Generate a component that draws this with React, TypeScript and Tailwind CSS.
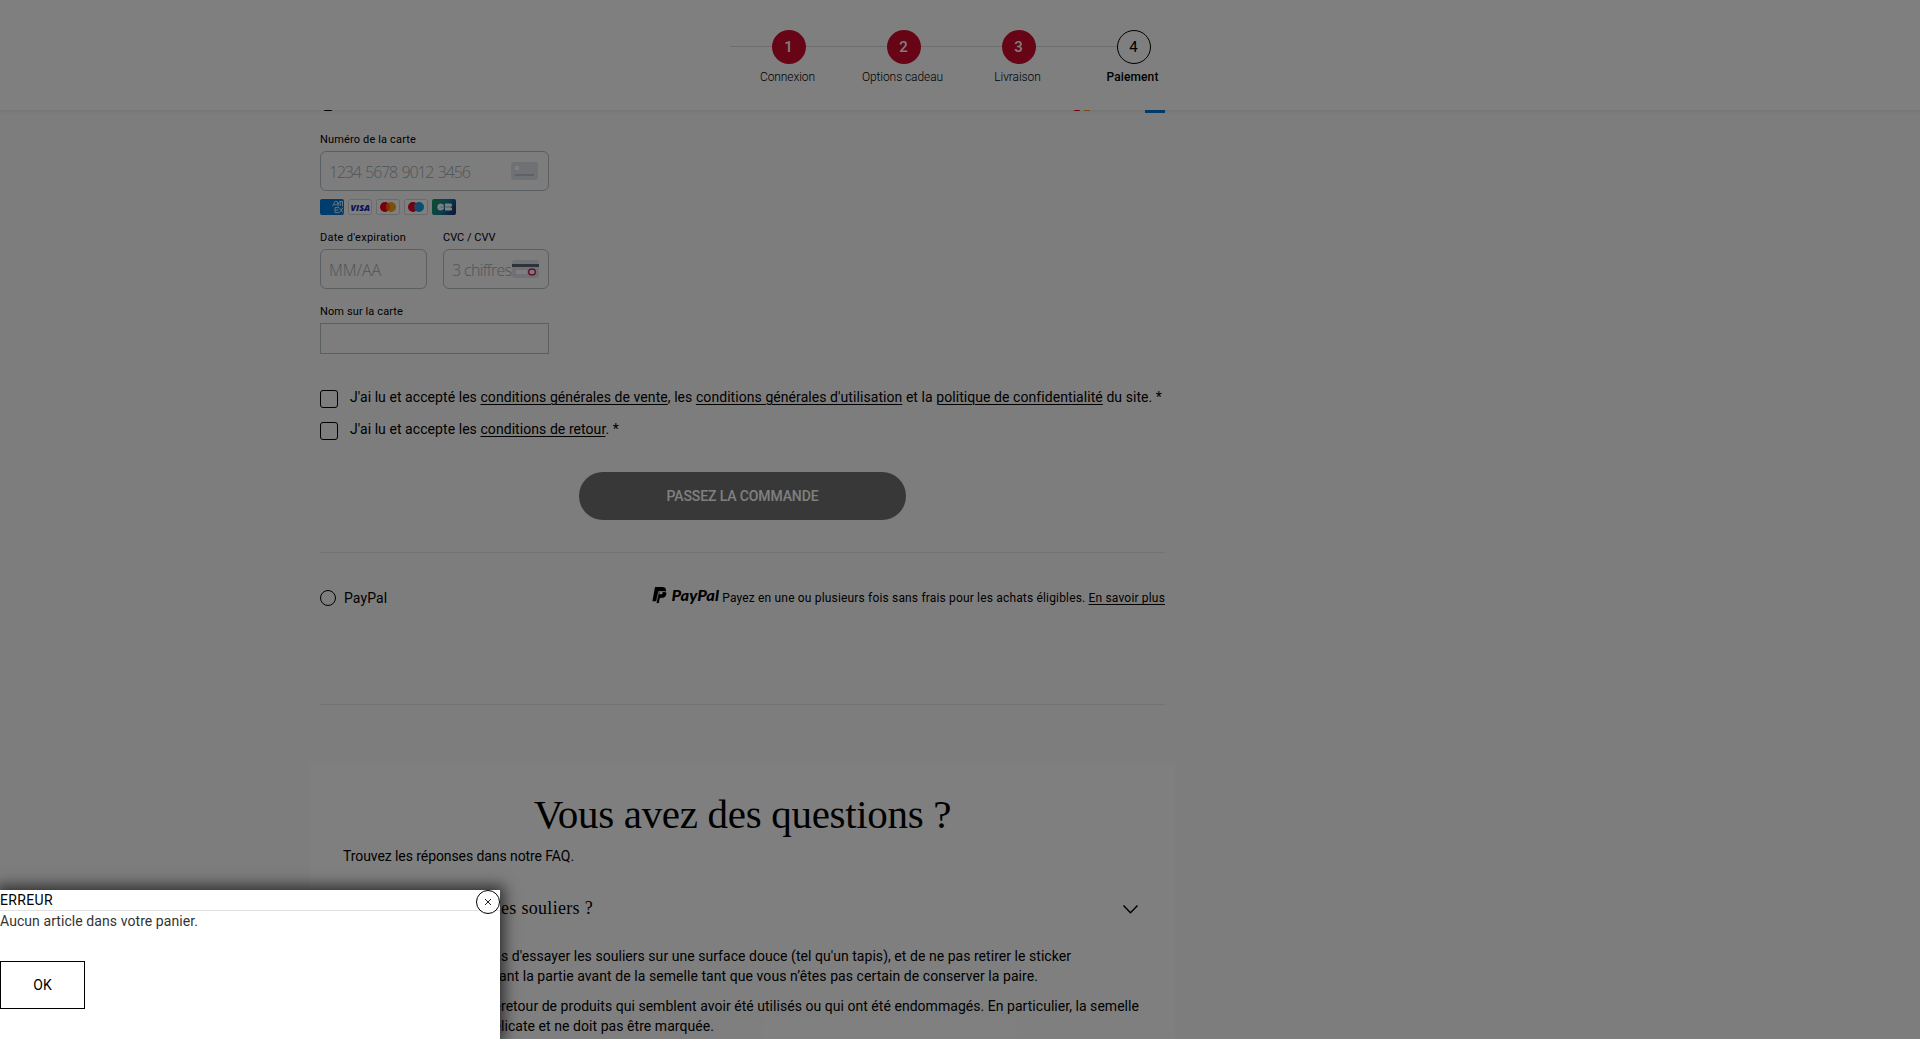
import type { ReactNode } from 'react';

function Step({ n, label, done = true }: { n: number; label: string; done?: boolean }) {
  return (
    <div className="flex w-[115px] flex-col items-center">
      <div
        className={
          done
            ? 'flex size-[34px] items-center justify-center rounded-full bg-[#ce0a2d] text-[15px] font-medium text-white'
            : 'flex size-[34px] items-center justify-center rounded-full border border-black bg-white text-[15px] text-black'
        }
      >
        {n}
      </div>
      <span
        className={
          done
            ? 'mt-[5px] mr-[2px] text-[12px] leading-4 font-light tracking-[-0.08px] whitespace-nowrap text-black'
            : 'mt-[5px] mr-[2px] text-[12px] leading-4 font-medium tracking-[0.11px] whitespace-nowrap text-black'
        }
      >
        {label}
      </span>
    </div>
  );
}

function Header() {
  return (
    <header className="relative z-10 h-[110px] bg-white pt-[30px] pl-[731px] shadow-[0_1px_4px_rgba(0,0,0,0.09)]">
      <div className="relative flex">
        <div className="absolute top-4 -left-px h-px w-[388px] bg-[#dadada]" />
        <div className="relative flex">
          <Step n={1} label="Connexion" />
          <Step n={2} label="Options cadeau" />
          <Step n={3} label="Livraison" />
          <Step n={4} label="Paiement" done={false} />
        </div>
      </div>
    </header>
  );
}

function Label({ children }: { children: ReactNode }) {
  return <div className="h-4 text-[11px] leading-4 tracking-[0.15px] whitespace-nowrap text-black">{children}</div>;
}

function Brands() {
  return (
    <div className="mt-2 flex gap-1">
      <svg width="24" height="16" viewBox="0 0 24 16">
        <rect width="24" height="16" rx="2" fill="#0079d8" />
        <g fill="none" stroke="#fff" strokeWidth="0.8">
          <path d="M12.500 7.200 15 2.500h2l1.200 3 1.400-3H23M14 5.700h3M18 7.500V3.800M20.300 7V3.200M22.500 7.300V3M15 8.600h4M15 8.600v5h4M15 11h3.500M19.500 8.800l3.500 4.700M23 8.800l-3.500 4.700" />
        </g>
      </svg>
      <svg width="24" height="16" viewBox="0 0 24 16">
        <rect x="0.500" y="0.500" width="23" height="15" rx="2" fill="#fff" stroke="#d5d5d5" />
        <text x="2.600" y="11.600" fontFamily="Open Sans" fontSize="9.500" fontWeight="800" fontStyle="italic" fill="#1a1fb5" textLength="19.500" lengthAdjust="spacingAndGlyphs">VISA</text>
      </svg>
      <svg width="24" height="16" viewBox="0 0 24 16">
        <rect x="0.500" y="0.500" width="23" height="15" rx="2" fill="#fff" stroke="#d5d5d5" />
        <circle cx="9" cy="8" r="5" fill="#eb001b" />
        <circle cx="15" cy="8" r="5" fill="#f79e1b" />
        <path d="M12 4a5 5 0 0 1 0 8 5 5 0 0 1 0-8Z" fill="#ff5f00" />
      </svg>
      <svg width="24" height="16" viewBox="0 0 24 16">
        <rect x="0.500" y="0.500" width="23" height="15" rx="2" fill="#fff" stroke="#d5d5d5" />
        <circle cx="9" cy="8" r="5" fill="#eb001b" />
        <circle cx="15" cy="8" r="5" fill="#00a2e5" />
        <path d="M12 4a5 5 0 0 1 0 8 5 5 0 0 1 0-8Z" fill="#7375cf" />
      </svg>
      <svg width="24" height="16" viewBox="0 0 24 16">
        <defs>
          <linearGradient id="cb" x1="0" y1="0.3" x2="1" y2="0.7">
            <stop offset="0" stopColor="#1a9a62" />
            <stop offset="0.5" stopColor="#137f9e" />
            <stop offset="1" stopColor="#16386f" />
          </linearGradient>
        </defs>
        <rect width="24" height="16" rx="2" fill="url(#cb)" />
        <path d="M12 7.700V6.500Q11 4.500 8.300 4.500A3.600 3.600 0 0 0 8.300 11.600Q11 11.600 12 9.500V8.300H8.500V7.700ZM13 4.500h5.500a1.600 1.600 0 0 1 0 3.200H13ZM13 8.300h5.500a1.600 1.600 0 0 1 0 3.300H13Z" fill="#fff" />
      </svg>
    </div>
  );
}

function CardForm() {
  return (
    <section className="w-[229px]">
      <Label>Numéro de la carte</Label>
      <div className="mt-[3px] flex h-10 items-center justify-between rounded-md border border-[#b4bfc4] pr-[10px] pl-2">
        <span className="pt-px font-['Open_Sans'] text-[16px] font-light tracking-[-1.2px] [word-spacing:1.6px] whitespace-nowrap text-[#9fabb0]">
          1234 5678 9012 3456
        </span>
        <svg width="27" height="18" viewBox="0 0 27 18">
          <rect width="27" height="18" rx="3" fill="#dfe3e8" />
          <rect x="4" y="4" width="4" height="4" rx="0.5" fill="#fff" />
          <rect x="4" y="12" width="19" height="2" fill="#bcc5cd" />
        </svg>
      </div>
      <Brands />
      <div className="mt-[15px] flex gap-4">
        <div className="w-[107px]">
          <Label>
            <span className="tracking-[0.27px]">Date d'expiration</span>
          </Label>
          <div className="mt-[3px] flex h-10 items-center rounded-md border border-[#b4bfc4] pl-2">
            <span className="pt-[2px] font-['Open_Sans'] text-[16px] font-light tracking-[-0.06px] text-[#9fabb0]">MM/AA</span>
          </div>
        </div>
        <div className="w-[106px]">
          <Label>
            <span className="tracking-normal">CVC / CVV</span>
          </Label>
          <div className="mt-[3px] flex h-10 items-center justify-between rounded-md border border-[#b4bfc4] pr-[9px] pl-2">
            <span className="w-[59px] pt-[2px] font-['Open_Sans'] text-[16px] font-light tracking-[-0.65px] whitespace-nowrap text-[#9fabb0]">
              3 chiffres
            </span>
            <svg width="27" height="18" viewBox="0 0 27 18">
              <rect width="27" height="18" rx="3" fill="#dfe3e8" />
              <rect y="4" width="27" height="3" fill="#5b6577" />
              <rect x="4" y="10" width="11" height="4" fill="#fff" />
              <rect x="16.700" y="9.200" width="6.600" height="5.600" rx="2.600" fill="#f3f4f6" stroke="#d10244" strokeWidth="1.200" />
            </svg>
          </div>
        </div>
      </div>
      <div className="mt-[15px]">
        <Label>
          <span className="tracking-[0.11px]">Nom sur la carte</span>
        </Label>
        <div className="mt-[3px] h-[31px] border border-[#b4bfc4]" />
      </div>
    </section>
  );
}

function Link({ children }: { children: ReactNode }) {
  return <a className="underline decoration-1 underline-offset-2">{children}</a>;
}

function Check({ children }: { children: ReactNode }) {
  return (
    <div className="flex h-8">
      <div className="mt-[3px] size-[18px] shrink-0 rounded-[3px] border border-black" />
      <p className="ml-3 text-[14px] leading-5 tracking-[0.065px] whitespace-nowrap">{children}</p>
    </div>
  );
}

function PayPalLogo() {
  return (
    <svg className="mt-px" width="68" height="20" viewBox="0 0 68 20">
      <path d="M3 0h7.200c3 0 4.300 1.800 3.700 4.300-.7 3-2.700 4.200-5.700 4.200H6L4.900 14.300H.4Z" fill="#000" />
      <path d="M6.700 4.500h5.300c2.200 0 3 1.300 2.600 3-.6 2.600-2.200 3.700-4.600 3.700H8.200L7.100 16.500H4Z" fill="#000" stroke="#fff" strokeWidth="0.800" />
      <path d="M7.600 4.900h2.200c.8 0 1 .5.800 1.200-.2.900-.8 1.200-1.700 1.200H7.200Z" fill="#fff" />
      <text x="19.500" y="13.700" fontFamily="Lato" fontSize="14.500" fontWeight="900" fontStyle="italic" textLength="47.500" lengthAdjust="spacingAndGlyphs">PayPal</text>
    </svg>
  );
}

function FaqLine({ hidden, children, track }: { hidden: string; children: ReactNode; track: string }) {
  return (
    <div className="flex h-5">
      <span className="flex w-[158px] shrink-0 justify-end whitespace-nowrap">{hidden}</span>
      <span className={'whitespace-pre ' + track}>{children}</span>
    </div>
  );
}

function Faq() {
  return (
    <section className="-mx-[10px] mt-[59px] h-[400px] w-[865px] bg-white px-[33px] pt-[26px]">
      <h2 className="text-center font-['Liberation_Serif'] text-[41px] leading-[48px] tracking-[-0.31px] whitespace-nowrap">
        Vous avez des questions ?
      </h2>
      <p className="mt-[8px] text-[14px] leading-5 tracking-[-0.08px]">Trouvez les réponses dans notre FAQ.</p>
      <div className="mt-[30px] flex h-6 justify-between">
        <div className="flex font-['Liberation_Serif'] text-[18px] leading-6">
          <span className="flex w-[158px] justify-end whitespace-nowrap">Comment essayer l</span>
          <span className="tracking-[0.31px]">es souliers ?</span>
        </div>
        <svg className="mt-[8px] mr-[3px]" width="17" height="12" viewBox="0 0 17 12" fill="none" stroke="#000" strokeWidth="1.500">
          <path d="M1.500 1.500 8.500 8.700 15.500 1.500" />
        </svg>
      </div>
      <div className="mt-[26px] text-[14px] leading-5">
        <FaqLine hidden="Nous recommandon" track="tracking-[0.041px]">
          s d'essayer les souliers sur une surface douce (tel qu'un tapis), et de ne pas retirer le sticker
        </FaqLine>
        <FaqLine hidden="transparent protége" track="ml-[-2px] tracking-[0.065px]">
          ant la partie avant de la semelle tant que vous n’êtes pas certain de conserver la paire.
        </FaqLine>
        <div className="h-[10px]" />
        <FaqLine hidden="Nous refusons le" track="tracking-[0.039px]">
          retour de produits qui semblent avoir été utilisés ou qui ont été endommagés. En particulier, la semelle
        </FaqLine>
        <FaqLine hidden="rouge est dé" track="tracking-[0.055px]">
          licate et ne doit pas être marquée.
        </FaqLine>
      </div>
    </section>
  );
}

function ErrorDialog() {
  return (
    <div className="absolute bottom-0 left-0 z-30 h-[149px] w-[500px] bg-white shadow-[0_0_14px_4px_rgba(0,0,0,0.65)]">
      <div className="h-[21px] border-b border-[#e0e0e0] text-[14px] leading-5 tracking-[0.35px]">ERREUR</div>
      <p className="text-[14px] leading-5 tracking-[0.073px] text-[#333]">Aucun article dans votre panier.</p>
      <button className="mt-[30px] flex h-12 w-[85px] items-center justify-center border border-black text-[14px]">OK</button>
      <button className="absolute top-0 right-0 flex size-6 items-center justify-center rounded-full border border-black bg-white">
        <svg width="8" height="8" viewBox="0 0 8 8" stroke="#222" strokeWidth="1">
          <path d="M1 1 7 7M7 1 1 7" />
        </svg>
      </button>
    </div>
  );
}

export default function App() {
  return (
    <div className="relative h-[1039px] w-[1920px] overflow-hidden bg-[#fafafa] font-[Roboto] text-black">
      <Header />
      <main className="w-[1165px] pl-[320px]">
        <div className="flex h-[3px] items-start justify-between">
          <div className="ml-1 h-px w-2 rounded-b-full bg-black" />
          <div className="flex items-start">
            <div className="h-px w-[6px] rounded-b-full bg-[#eb001b]" />
            <div className="ml-1 h-px w-[6px] rounded-b-full bg-[#f79e1b]" />
            <div className="ml-[55px] h-[3px] w-5 bg-[#0079d8]" />
          </div>
        </div>
        <div className="h-[19px]" />
        <CardForm />
        <div className="mt-[33px]">
          <Check>
            J'ai lu et accepté les <Link>conditions générales de vente</Link>, les <Link>conditions générales d'utilisation</Link> et la{' '}
            <Link>politique de confidentialité</Link> du site. *
          </Check>
          <Check>
            J'ai lu et accepte les <Link>conditions de retour</Link>. *
          </Check>
        </div>
        <button className="mx-auto mt-[21px] flex h-12 w-[327px] items-center justify-center rounded-full bg-[#707070] text-[14px] font-medium tracking-[-0.115px] text-white">
          PASSEZ LA COMMANDE
        </button>
        <div className="mt-8 h-px bg-[#e4e4e4]" />
        <div className="mt-[33px] flex h-5 items-start justify-between">
          <div className="flex">
            <div className="mt-1 size-4 rounded-full border border-black" />
            <span className="ml-2 pt-[2px] text-[14px] leading-5 tracking-[0.1px]">PayPal</span>
          </div>
          <div className="flex">
            <PayPalLogo />
            <p className="ml-[2px] pt-[2px] text-[12px] leading-5 tracking-[0.17px] whitespace-nowrap">
              Payez en une ou plusieurs fois sans frais pour les achats éligibles. <Link>En savoir plus</Link>
            </p>
          </div>
        </div>
        <div className="mt-[98px] h-px bg-[#e4e4e4]" />
        <Faq />
      </main>
      <div className="absolute inset-0 z-20 bg-black/50" />
      <ErrorDialog />
    </div>
  );
}
